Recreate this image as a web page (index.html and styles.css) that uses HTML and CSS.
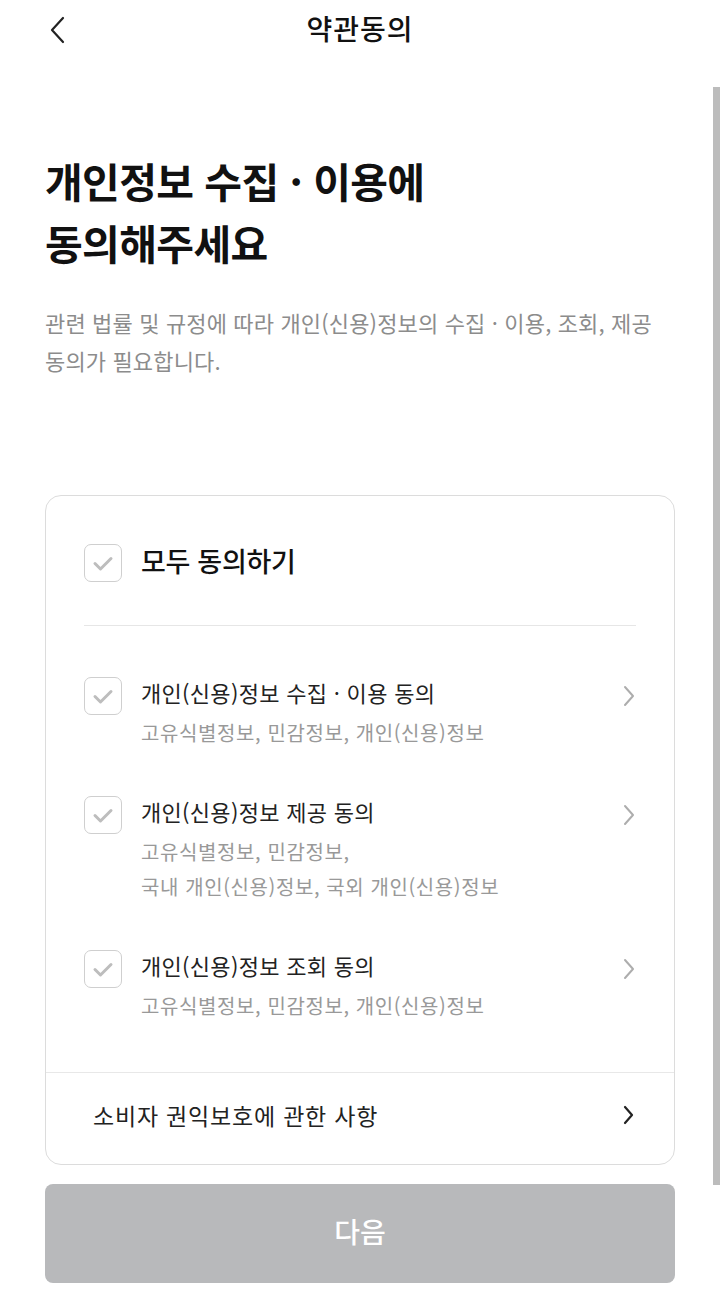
FILE: index.html
```html
<!DOCTYPE html>
<html lang="ko">
<head>
<meta charset="utf-8">
<title>약관동의</title>
<link rel="stylesheet" href="styles.css">
</head>
<body>
<div class="screen">
  <header class="topbar">
    <button class="back" aria-label="뒤로">
      <svg width="18" height="28" viewBox="0 0 18 28"><path d="M15 2 L4 14 L15 26" fill="none" stroke="#222" stroke-width="2.2" stroke-linecap="round" stroke-linejoin="round"/></svg>
    </button>
    <h1 class="topbar-title">약관동의</h1>
  </header>

  <main class="content">
    <h2 class="headline">개인정보 수집 · 이용에<br>동의해주세요</h2>
    <p class="lead">관련 법률 및 규정에 따라 개인(신용)정보의 수집 · 이용, 조회, 제공<br>동의가 필요합니다.</p>

    <section class="card">
      <div class="card-body">
        <div class="all-row">
          <span class="check"><svg width="38" height="38" viewBox="0 0 38 38"><path d="M11 19.5 L16.5 25 L27 14.5" fill="none" stroke="#bdbdbd" stroke-width="3" stroke-linecap="round" stroke-linejoin="round"/></svg></span>
          <span class="all-label">모두 동의하기</span>
        </div>
        <div class="divider"></div>
        <ul class="items">
          <li class="item">
            <span class="check"><svg width="38" height="38" viewBox="0 0 38 38"><path d="M11 19.5 L16.5 25 L27 14.5" fill="none" stroke="#bdbdbd" stroke-width="3" stroke-linecap="round" stroke-linejoin="round"/></svg></span>
            <div class="item-text">
              <div class="item-title">개인(신용)정보 수집 · 이용 동의</div>
              <div class="item-sub">고유식별정보, 민감정보, 개인(신용)정보</div>
            </div>
            <span class="chev"><svg width="14" height="38" viewBox="0 0 14 38"><path d="M3 10 L11 19 L3 28" fill="none" stroke="#adadad" stroke-width="2" stroke-linecap="round" stroke-linejoin="round"/></svg></span>
          </li>
          <li class="item">
            <span class="check"><svg width="38" height="38" viewBox="0 0 38 38"><path d="M11 19.5 L16.5 25 L27 14.5" fill="none" stroke="#bdbdbd" stroke-width="3" stroke-linecap="round" stroke-linejoin="round"/></svg></span>
            <div class="item-text">
              <div class="item-title">개인(신용)정보 제공 동의</div>
              <div class="item-sub">고유식별정보, 민감정보,<br>국내 개인(신용)정보, 국외 개인(신용)정보</div>
            </div>
            <span class="chev"><svg width="14" height="38" viewBox="0 0 14 38"><path d="M3 10 L11 19 L3 28" fill="none" stroke="#adadad" stroke-width="2" stroke-linecap="round" stroke-linejoin="round"/></svg></span>
          </li>
          <li class="item">
            <span class="check"><svg width="38" height="38" viewBox="0 0 38 38"><path d="M11 19.5 L16.5 25 L27 14.5" fill="none" stroke="#bdbdbd" stroke-width="3" stroke-linecap="round" stroke-linejoin="round"/></svg></span>
            <div class="item-text">
              <div class="item-title">개인(신용)정보 조회 동의</div>
              <div class="item-sub">고유식별정보, 민감정보, 개인(신용)정보</div>
            </div>
            <span class="chev"><svg width="14" height="38" viewBox="0 0 14 38"><path d="M3 10 L11 19 L3 28" fill="none" stroke="#adadad" stroke-width="2" stroke-linecap="round" stroke-linejoin="round"/></svg></span>
          </li>
        </ul>
      </div>
      <div class="card-foot">
        <span class="foot-label">소비자 권익보호에 관한 사항</span>
        <span class="chev"><svg width="14" height="32" viewBox="0 0 14 32"><path d="M3 8 L10 16 L3 24" fill="none" stroke="#222" stroke-width="2.2" stroke-linecap="round" stroke-linejoin="round"/></svg></span>
      </div>
    </section>

    <button class="next" disabled>다음</button>
  </main>

  <div class="scrollbar"></div>
</div>
</body>
</html>
```

FILE: styles.css
```css
* { box-sizing: border-box; }
html, body {
  margin: 0;
  padding: 0;
  background: #fff;
}
body {
  font-family: "Noto Sans CJK KR", "Noto Sans", sans-serif;
  color: #111;
  overflow: hidden;
}
.screen {
  position: relative;
  width: 720px;
  height: 1305px;
}
.topbar {
  position: relative;
  height: 56px;
  display: flex;
  align-items: center;
  justify-content: center;
}
.back {
  position: absolute;
  left: 42px;
  top: 15px;
  width: 30px;
  height: 30px;
  padding: 0;
  border: 0;
  background: none;
  display: flex;
  align-items: center;
  justify-content: center;
}
.topbar-title {
  margin: 0;
  font-size: 28px;
  font-weight: 500;
  line-height: 56px;
  color: #111;
  letter-spacing: 1px;
}
.content {
  padding: 0 45px;
}
.headline {
  margin: 93px 0 0;
  font-size: 41px;
  line-height: 62px;
  font-weight: 700;
  color: #111;
  letter-spacing: -0.6px;
}
.lead {
  margin: 30px 0 0;
  font-size: 22px;
  line-height: 38px;
  color: #8c8c8c;
  letter-spacing: 0.15px;
}
.card {
  margin-top: 116px;
  border: 1px solid #dcdcdc;
  border-radius: 16px;
}
.card-body {
  padding: 48px 38px 49px;
}
.all-row {
  display: flex;
  align-items: center;
  gap: 19px;
  height: 38px;
}
.check {
  flex: none;
  width: 38px;
  height: 38px;
  border: 1.5px solid #cfcfcf;
  border-radius: 7px;
  display: flex;
  align-items: center;
  justify-content: center;
  overflow: hidden;
}
.check svg { flex: none; }
.all-label {
  font-size: 27px;
  font-weight: 500;
  color: #111;
  letter-spacing: -0.3px;
  margin-top: -6px;
}
.divider {
  height: 1px;
  background: #e6e6e6;
  margin-top: 43px;
}
.items {
  list-style: none;
  margin: 49px 0 0;
  padding: 0;
  display: flex;
  flex-direction: column;
  gap: 44px;
}
.item {
  display: flex;
  align-items: flex-start;
  gap: 19px;
}
.item .check { margin-top: 2px; }
.item-text {
  flex: 1;
}
.item-title {
  font-size: 22px;
  line-height: 34px;
  color: #222;
  letter-spacing: 0.3px;
}
.item-sub {
  margin-top: 6px;
  font-size: 20px;
  line-height: 35px;
  color: #999;
  letter-spacing: 0.6px;
}
.chev {
  flex: none;
  display: flex;
  margin-top: 2px;
}
.card-foot {
  border-top: 1px solid #e8e8e8;
  padding: 26px 38px 33px 47px;
  display: flex;
  align-items: center;
  justify-content: space-between;
}
.foot-label {
  font-size: 23px;
  line-height: 32px;
  color: #222;
  letter-spacing: 0.8px;
}
.card-foot .chev { margin-top: 0; }
.next {
  display: block;
  width: 100%;
  height: 99px;
  margin-top: 19px;
  padding: 0 0 6px;
  border: 0;
  border-radius: 8px;
  background: #b8b9bb;
  color: #fff;
  font-family: inherit;
  font-size: 28px;
  font-weight: 500;
  letter-spacing: 0;
}
.scrollbar {
  position: absolute;
  right: 0;
  top: 87px;
  width: 7px;
  height: 1098px;
  background: #bcbcbc;
}
```
